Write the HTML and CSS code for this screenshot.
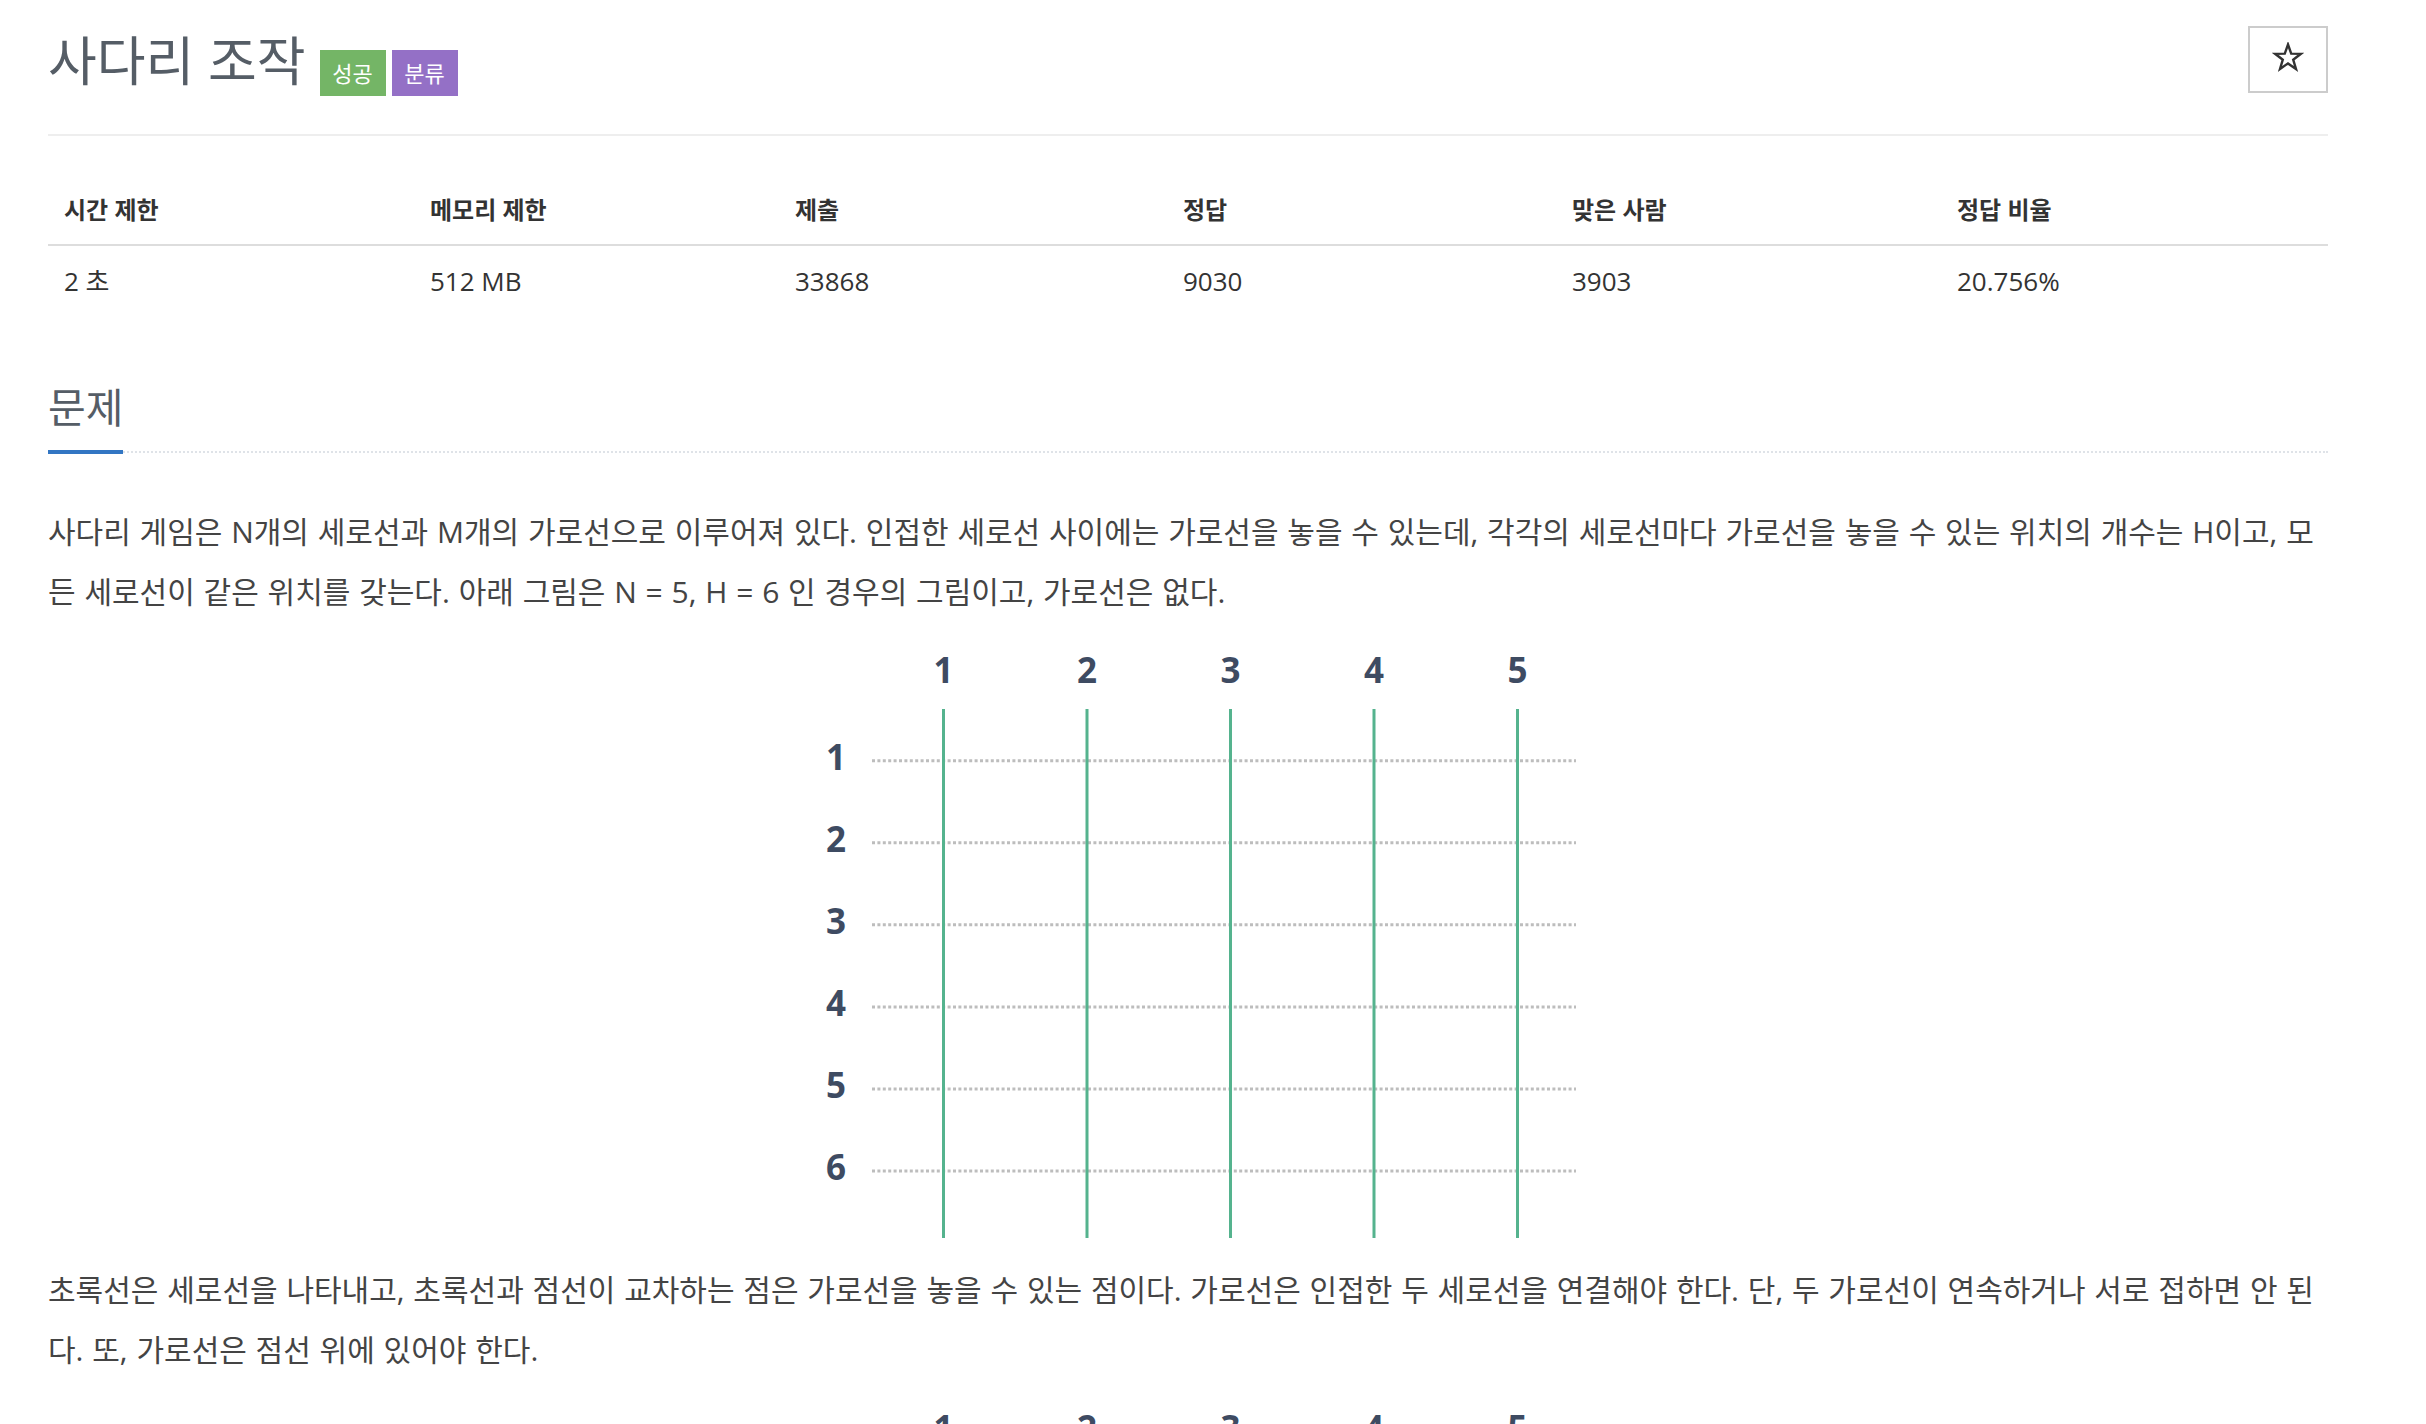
FILE: index.html
```html
<!DOCTYPE html>
<html lang="ko">
<head>
<meta charset="utf-8">
<title>사다리 조작</title>
<link rel="stylesheet" href="styles.css">
</head>
<body>
<div class="container">
  <header class="page-header">
    <h1 class="title-row">
      <span class="title">사다리 조작</span>
      <span class="badge badge-success">성공</span>
      <span class="badge badge-tag">분류</span>
    </h1>
    <button class="star-btn" type="button" aria-label="즐겨찾기">
      <svg class="star-icon" width="32" height="32" viewBox="-16 -16 32 32">
        <polygon points="0,-13.5 3.2,-4.4 12.9,-4.2 5.2,1.7 8,11 0,5.4 -8,11 -5.2,1.7 -12.9,-4.2 -3.2,-4.4"/>
      </svg>
    </button>
  </header>

  <table class="info">
    <thead>
      <tr>
        <th>시간 제한</th>
        <th>메모리 제한</th>
        <th>제출</th>
        <th>정답</th>
        <th>맞은 사람</th>
        <th>정답 비율</th>
      </tr>
    </thead>
    <tbody>
      <tr>
        <td>2 초</td>
        <td>512 MB</td>
        <td>33868</td>
        <td>9030</td>
        <td>3903</td>
        <td>20.756%</td>
      </tr>
    </tbody>
  </table>

  <section class="problem">
    <div class="headline"><h2>문제</h2></div>
    <p class="text">사다리 게임은 N개의 세로선과 M개의 가로선으로 이루어져 있다. 인접한 세로선 사이에는 가로선을 놓을 수 있는데, 각각의 세로선마다 가로선을 놓을 수 있는 위치의 개수는 H이고, 모든 세로선이 같은 위치를 갖는다. 아래 그림은 N = 5, H = 6 인 경우의 그림이고, 가로선은 없다.</p>
    <p class="figure">
      <svg class="ladder" width="800" height="602" viewBox="0 0 800 602">
        <g class="col-labels">
          <text x="155.5" y="47">1</text>
          <text x="299" y="47">2</text>
          <text x="442.5" y="47">3</text>
          <text x="586" y="47">4</text>
          <text x="729.5" y="47">5</text>
        </g>
        <g class="row-labels">
          <text x="48" y="133.5">1</text>
          <text x="48" y="215.6">2</text>
          <text x="48" y="297.6">3</text>
          <text x="48" y="379.7">4</text>
          <text x="48" y="461.8">5</text>
          <text x="48" y="543.8">6</text>
        </g>
        <g class="rungs">
          <line x1="84" y1="124.7" x2="788" y2="124.7"/>
          <line x1="84" y1="206.8" x2="788" y2="206.8"/>
          <line x1="84" y1="288.8" x2="788" y2="288.8"/>
          <line x1="84" y1="370.9" x2="788" y2="370.9"/>
          <line x1="84" y1="452.9" x2="788" y2="452.9"/>
          <line x1="84" y1="535" x2="788" y2="535"/>
        </g>
        <g class="rails">
          <line x1="155.5" y1="73" x2="155.5" y2="602"/>
          <line x1="299" y1="73" x2="299" y2="602"/>
          <line x1="442.5" y1="73" x2="442.5" y2="602"/>
          <line x1="586" y1="73" x2="586" y2="602"/>
          <line x1="729.5" y1="73" x2="729.5" y2="602"/>
        </g>
      </svg>
    </p>
    <p class="text">초록선은 세로선을 나타내고, 초록선과 점선이 교차하는 점은 가로선을 놓을 수 있는 점이다. 가로선은 인접한 두 세로선을 연결해야 한다. 단, 두 가로선이 연속하거나 서로 접하면 안 된다. 또, 가로선은 점선 위에 있어야 한다.</p>
    <p class="figure">
      <svg class="ladder" width="800" height="602" viewBox="0 0 800 602">
        <g class="col-labels">
          <text x="155.5" y="47">1</text>
          <text x="299" y="47">2</text>
          <text x="442.5" y="47">3</text>
          <text x="586" y="47">4</text>
          <text x="729.5" y="47">5</text>
        </g>
        <g class="row-labels">
          <text x="48" y="133.5">1</text>
          <text x="48" y="215.6">2</text>
          <text x="48" y="297.6">3</text>
          <text x="48" y="379.7">4</text>
          <text x="48" y="461.8">5</text>
          <text x="48" y="543.8">6</text>
        </g>
        <g class="rungs">
          <line x1="84" y1="124.7" x2="788" y2="124.7"/>
          <line x1="84" y1="206.8" x2="788" y2="206.8"/>
          <line x1="84" y1="288.8" x2="788" y2="288.8"/>
          <line x1="84" y1="370.9" x2="788" y2="370.9"/>
          <line x1="84" y1="452.9" x2="788" y2="452.9"/>
          <line x1="84" y1="535" x2="788" y2="535"/>
        </g>
        <g class="rails">
          <line x1="155.5" y1="73" x2="155.5" y2="602"/>
          <line x1="299" y1="73" x2="299" y2="602"/>
          <line x1="442.5" y1="73" x2="442.5" y2="602"/>
          <line x1="586" y1="73" x2="586" y2="602"/>
          <line x1="729.5" y1="73" x2="729.5" y2="602"/>
        </g>
      </svg>
    </p>
  </section>
</div>
</body>
</html>
```

FILE: styles.css
```css
html {
  overflow: hidden;
}

body {
  margin: 0;
  background: #ffffff;
  color: #333333;
  font-family: "Open Sans", "Noto Sans CJK KR", sans-serif;
}

.container {
  width: 2280px;
  margin-left: 48px;
}

/* ---------- header ---------- */
.page-header {
  display: flex;
  justify-content: space-between;
  align-items: flex-start;
  padding: 26px 0 38px;
  border-bottom: 2px solid #eeeeee;
}

.title-row {
  display: flex;
  align-items: flex-end;
  margin: 0;
  font-weight: 400;
}

.title {
  font-size: 53px;
  line-height: 70px;
  color: #555d66;
}

.badge {
  display: flex;
  align-items: center;
  justify-content: center;
  width: 66px;
  height: 46px;
  margin-left: 6px;
  color: #ffffff;
  font-size: 22px;
  line-height: 1;
  font-weight: 400;
}

.badge-success {
  margin-left: 14px;
  background: #74b566;
}

.badge-tag {
  background: #9470c6;
}

.star-btn {
  box-sizing: border-box;
  display: flex;
  align-items: center;
  justify-content: center;
  width: 80px;
  height: 67px;
  padding: 0 0 4px;
  border: 2px solid #cccccc;
  background: #ffffff;
}

.star-icon polygon {
  fill: none;
  stroke: #333333;
  stroke-width: 2.4;
  stroke-linejoin: miter;
}

/* ---------- info table ---------- */
.info {
  width: 100%;
  margin-top: 40px;
  border-collapse: collapse;
  table-layout: fixed;
  font-size: 26px;
}

.info th {
  box-sizing: border-box;
  padding: 13px 14px 13px 16px;
  line-height: 42px;
  text-align: left;
  font-size: 24px;
  font-weight: 700;
  border-bottom: 2px solid #dddddd;
}

.info th:nth-child(1) { width: 366px; }
.info th:nth-child(2) { width: 365px; }
.info th:nth-child(3) { width: 388px; }
.info th:nth-child(4) { width: 389px; }
.info th:nth-child(5) { width: 385px; }

.info td {
  padding: 14px 14px 14px 16px;
  line-height: 42px;
}

/* ---------- problem section ---------- */
.headline {
  display: flex;
  margin-top: 61px;
  margin-bottom: 49px;
  border-bottom: 2px dotted #dfe3e8;
}

.headline h2 {
  margin: 0 0 -3px;
  padding-bottom: 13px;
  font-size: 41px;
  line-height: 60px;
  font-weight: 400;
  color: #555d66;
  border-bottom: 4px solid #3276c3;
}

.problem .text {
  margin: 0 0 14px;
  font-size: 30px;
  word-spacing: 1px;
  line-height: 60px;
  color: #444444;
}

.problem .figure {
  margin: 0 0 22px;
  line-height: 0;
}

.ladder {
  display: block;
  margin: 0 auto;
}

.ladder text {
  font-family: "Open Sans", sans-serif;
  font-size: 35px;
  font-weight: 700;
  fill: #3e4b62;
  text-anchor: middle;
}

.rungs line {
  stroke: #bdbdbd;
  stroke-width: 3;
  stroke-dasharray: 3 2.4;
}

.rails line {
  stroke: #55b38e;
  stroke-width: 3;
}
```
